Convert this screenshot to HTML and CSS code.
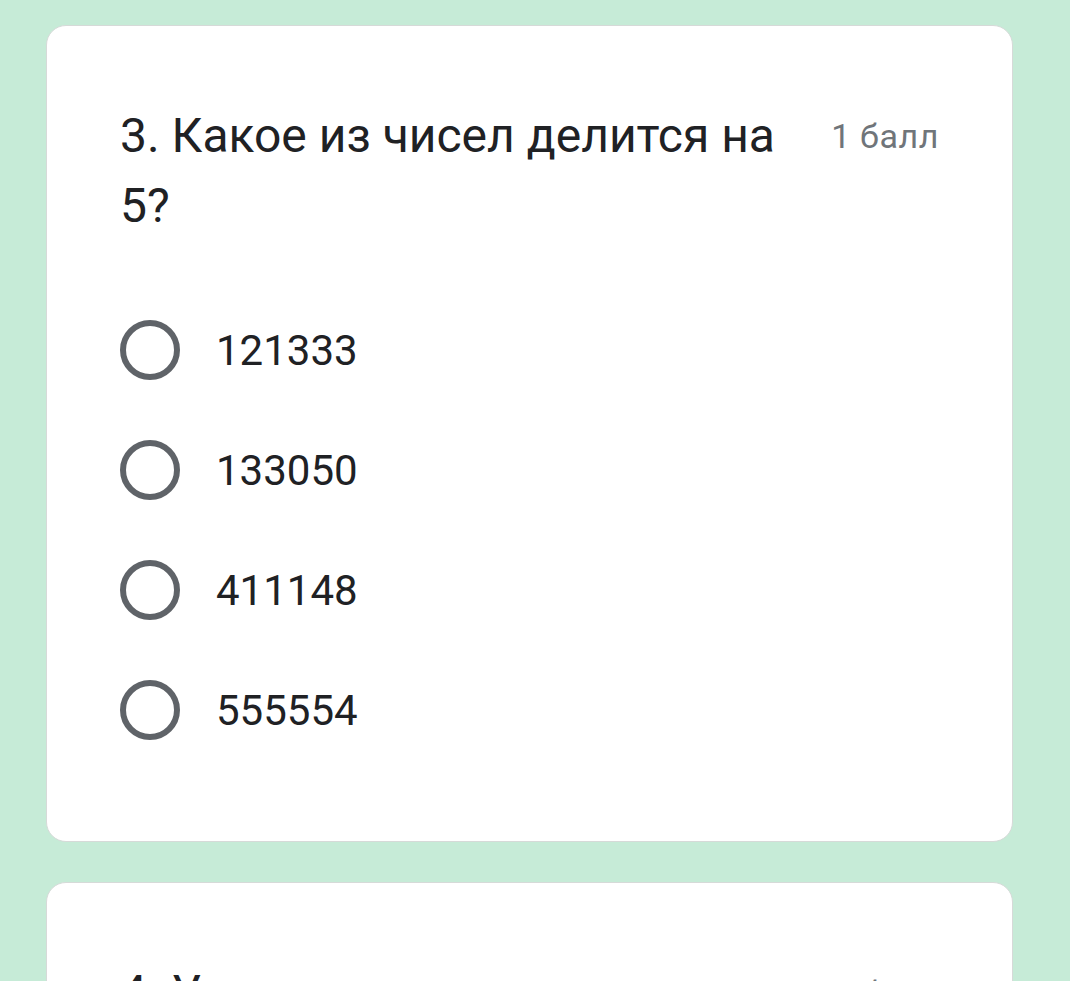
FILE: index.html
```html
<!DOCTYPE html>
<html lang="ru">
<head>
  <meta charset="UTF-8" />
  <meta name="viewport" content="width=device-width, initial-scale=1.0"/>
  <title>Тест</title>
  <link rel="stylesheet" href="styles.css">
</head>
<body>
  <div class="card">
    <div class="question">
      <div class="title">3. Какое из чисел делится на 5?</div>
      <div class="points">1 балл</div>
    </div>

    <div class="options">
      <label class="option"><span class="radio"></span> 121333</label>
      <label class="option"><span class="radio"></span> 133050</label>
      <label class="option"><span class="radio"></span> 411148</label>
      <label class="option"><span class="radio"></span> 555554</label>
    </div>
  </div>

  <div class="card">
    <div class="question">
      <div class="title">4. Укажите наименьшее из чисел</div>
      <div class="points">1 балл</div>
    </div>
  </div>
</body>
</html>
```
FILE: styles.css
```css
body {
  background-color: #c6ebd7;
  font-family: Roboto, "Noto Sans", sans-serif;
  color: #202124;
  margin: 0;
  padding: 25px 0 0 46px;
  height: 981px;
  overflow: hidden;
  box-sizing: border-box;
}

.card {
  background-color: #fff;
  width: 967px;
  box-sizing: border-box;
  border: 1px solid #d6dad8;
  border-radius: 20px;
  padding: 75px 73px 71px 73px;
  margin-bottom: 40px;
}

.question {
  display: flex;
  align-items: flex-start;
  justify-content: space-between;
}

.title {
  width: 680px;
  font-size: 48px;
  line-height: 70px;
}

.points {
  font-size: 34px;
  letter-spacing: 0.6px;
  line-height: 70px;
  color: #70757a;
}

.options {
  margin-top: 49px;
}

.option {
  display: flex;
  align-items: center;
  gap: 36px;
  height: 120px;
  font-size: 42px;
}

.radio {
  width: 48px;
  height: 48px;
  border: 6px solid #5f6368;
  border-radius: 50%;
  flex-shrink: 0;
}
```
